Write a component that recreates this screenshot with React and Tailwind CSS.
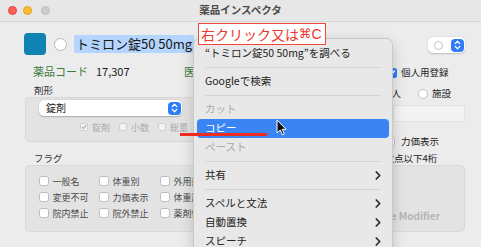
import React from "react";

const Chevron = () => (
  <svg width="6" height="9" viewBox="0 0 6 9">
    <path d="M1.3 1 L4.7 4.5 L1.3 8" fill="none" stroke="#2a2a2a" strokeWidth="1.7" strokeLinecap="round" strokeLinejoin="round" />
  </svg>
);

const Stepper = ({ className }) => (
  <div className={"flex items-center justify-center rounded-[4px] bg-[#2f7df6] " + className}>
    <svg width="7" height="10" viewBox="0 0 7 10">
      <path d="M1.2 3.6 L3.5 1.3 L5.8 3.6 M1.2 6.4 L3.5 8.7 L5.8 6.4" fill="none" stroke="white" strokeWidth="1.3" strokeLinecap="round" strokeLinejoin="round" />
    </svg>
  </div>
);

const MenuItem = ({ label, disabled, active, sub }) => (
  <div
    className={
      "mx-[3px] h-[19px] flex items-center justify-between pl-[8px] pr-[8px] rounded-[4px] " +
      (active ? "bg-[#3a84f4] text-white" : disabled ? "text-[#a9a9a9]" : "text-[#232323]")
    }
  >
    <span>{label}</span>
    {sub && <Chevron />}
  </div>
);

const Sep = () => (
  <div className="h-[9px] flex items-center px-[11px]">
    <div className="h-px w-full bg-[#d3d3d3]" />
  </div>
);

const FlagCb = ({ label }) => (
  <div className="flex items-center h-[16px]">
    <div className="w-[10px] h-[10px] rounded-[2.5px] border border-[#bdbdbd] bg-white shrink-0" />
    <span className="ml-[3.5px] text-[9px] leading-none text-[#4a4a4a] whitespace-nowrap">{label}</span>
  </div>
);

const DisCb = ({ label, checked, first }) => (
  <div className={"flex items-center " + (first ? "" : "ml-[9px]")}>
    <div className="w-[8px] h-[8px] rounded-[2px] border border-[#d0d0d0] bg-[#f3f3f3] flex items-center justify-center">
      {checked && (
        <svg width="6" height="6" viewBox="0 0 6 6">
          <path d="M1 3.2 L2.5 4.7 L5 1.3" fill="none" stroke="#b0b0b0" strokeWidth="1.1" strokeLinecap="round" strokeLinejoin="round" />
        </svg>
      )}
    </div>
    <span className="ml-[4px] text-[9px] leading-none text-[#ababab]">{label}</span>
  </div>
);

export default function App() {
  return (
    <div className="relative w-[481px] h-[247px] overflow-hidden bg-[#ececec] font-['Noto_Sans_CJK_JP',sans-serif]">
      {/* title bar */}
      <div className="h-[22px] border-b border-[#d6d6d6] bg-[#e7e7e7] grid grid-cols-[1fr_auto_1fr] items-center">
        <div className="flex items-center pl-[8px]">
          <div className="w-[9px] h-[9px] rounded-full bg-[#fe5f57] border border-[#e2463f]" />
          <div className="w-[9px] h-[9px] rounded-full bg-[#febc2e] border border-[#dea123] ml-[6px]" />
          <div className="w-[9px] h-[9px] rounded-full bg-[#cdcdcd] border border-[#bfbfbf] ml-[9px]" />
        </div>
        <div className="text-[10.5px] font-semibold text-[#4b4b4b] leading-none">薬品インスペクタ</div>
        <div />
      </div>

      {/* top section */}
      <div className="flex items-start">
        {/* left column */}
        <div className="w-[380px] pl-[24px] flex flex-col">
          <div className="mt-[11px] h-[22px] flex items-center">
            <div className="w-[22px] h-[22px] rounded-[4px] bg-[#0f84b3]" />
            <div className="ml-[8px] w-[13px] h-[13px] rounded-full border border-[#b8b8b8] bg-white" />
            <div className="ml-[7px] h-[18px] px-[2px] bg-[#b4d5fe] flex items-center text-[13px] text-[#1a1a1a] whitespace-nowrap">
              トミロン錠50 50mg
            </div>
          </div>
          <div className="mt-[9px] h-[14px] flex items-center pl-[9px]">
            <span className="w-[63px] text-[11px] text-[#3c7b3f] leading-none">薬品コード</span>
            <span className="w-[88px] text-[11px] text-[#1c1c1c] leading-none">17,307</span>
            <span className="text-[11px] text-[#3c7b3f] leading-none">医</span>
          </div>
          <div className="mt-[7px] h-[12px] flex items-center pl-[10px] text-[9.5px] text-[#333] leading-none">剤形</div>
          <div className="ml-[1px] h-[45px] w-[340px] rounded-[5px] bg-[#e3e3e3] border border-[#d9d9d9] flex flex-col">
            <div className="ml-[13px] mt-[2px] w-[143px] h-[16px] rounded-[5px] bg-white shadow-[0_0.5px_1.5px_rgba(0,0,0,0.25)] flex items-center justify-between pl-[7px] pr-[1.5px]">
              <span className="text-[10px] text-[#1a1a1a] leading-none">錠剤</span>
              <Stepper className="w-[13px] h-[13px]" />
            </div>
            <div className="mt-[5px] h-[12px] flex items-center pl-[54px]">
              <DisCb label="錠剤" checked first />
              <DisCb label="小数" />
              <DisCb label="総量" />
            </div>
          </div>
          <div className="mt-[11px] h-[12px] flex items-center pl-[10px] text-[9.5px] text-[#333] leading-none">フラグ</div>
        </div>

        {/* right column */}
        <div className="w-[85px] flex flex-col">
          <div className="mt-[15px] h-[16px] flex justify-end">
            <div className="w-[37px] h-[16px] rounded-[5px] bg-white shadow-[0_0.5px_1.5px_rgba(0,0,0,0.2)] flex items-center justify-between pl-[6px] pr-[1.5px]">
              <div className="w-[9px] h-[9px] rounded-full border border-[#c4c4c4]" />
              <Stepper className="w-[13px] h-[13px]" />
            </div>
          </div>
          <div className="mt-[13px] h-[14px] flex items-center">
            <div className="ml-[7px] w-[10px] h-[10px] rounded-[2.5px] bg-[#2f7df6] flex items-center justify-center">
              <svg width="8" height="8" viewBox="0 0 8 8">
                <path d="M1.5 4.2 L3.2 5.8 L6.5 2" fill="none" stroke="white" strokeWidth="1.4" strokeLinecap="round" strokeLinejoin="round" />
              </svg>
            </div>
            <span className="ml-[4px] text-[9.5px] text-[#222] leading-none whitespace-nowrap">個人用登録</span>
          </div>
          <div className="mt-[7px] h-[14px] flex items-center">
            <span className="ml-[2px] text-[9.5px] text-[#222] leading-none">個人</span>
            <div className="ml-[17px] w-[10px] h-[10px] rounded-full border border-[#c4c4c4] bg-white" />
            <span className="ml-[4px] text-[9.5px] text-[#222] leading-none">施設</span>
          </div>
          <div className="mt-[4px] ml-[13px] w-[72px] h-[17px] bg-[#f3f3f3] border border-[#e2e2e2] rounded-[2px]" />
          <div className="mt-[14px] h-[12px] flex items-center">
            <div className="ml-[5px] w-[10px] h-[10px] rounded-[2.5px] border border-[#bdbdbd] bg-white" />
            <span className="ml-[6px] text-[9.5px] text-[#222] leading-none whitespace-nowrap">力価表示</span>
          </div>
          <div className="mt-[5px] h-[12px] flex items-center">
            <span className="ml-[-5px] text-[9.5px] text-[#222] leading-none whitespace-nowrap">小数点以下4桁</span>
          </div>
        </div>
      </div>

      {/* flag box */}
      <div className="ml-[25px] w-[440px] h-[67px] rounded-[5px] bg-[#e3e3e3] border border-[#d9d9d9] flex">
        <div className="pl-[13px] pt-[7px] grid grid-cols-[60px_61px_60px] content-start">
          <FlagCb label="一般名" />
          <FlagCb label="体重別" />
          <FlagCb label="外用剤" />
          <FlagCb label="変更不可" />
          <FlagCb label="力価表示" />
          <FlagCb label="体重計算" />
          <FlagCb label="院内禁止" />
          <FlagCb label="院外禁止" />
          <FlagCb label="薬剤情報" />
        </div>
        <div className="ml-auto mr-[24px] self-end mb-[10px] text-[10px] font-semibold text-[#b5b5b5] leading-none">Dose Modifier</div>
      </div>

      {/* context menu */}
      <div className="absolute left-[193px] top-[38px] w-[200px] h-[220px] rounded-[7px] bg-[#e8e8e8] border border-[#c9c9c9] shadow-[0_4px_14px_rgba(0,0,0,0.18)] pt-[5px] text-[10.5px] leading-none">
        <MenuItem label={"\u201Cトミロン錠50 50mg\u201Dを調べる"} />
        <Sep />
        <MenuItem label="Googleで検索" />
        <Sep />
        <MenuItem label="カット" disabled />
        <MenuItem label="コピー" active />
        <MenuItem label="ペースト" disabled />
        <Sep />
        <MenuItem label="共有" sub />
        <Sep />
        <MenuItem label="スペルと文法" sub />
        <MenuItem label="自動置換" sub />
        <MenuItem label="スピーチ" sub />
      </div>

      {/* callout */}
      <div className="absolute left-[198px] top-[23px] w-[128px] h-[22px] bg-white border-[1.5px] border-[#f2463a] flex items-center pl-[2px] text-[14px] text-[#f0352a] leading-none whitespace-nowrap">
        <span>右クリック又は</span>
        <span className="font-['DejaVu_Sans',sans-serif] text-[12.5px]">⌘</span>
        <span className="font-['Liberation_Sans',sans-serif]">C</span>
      </div>

      {/* red underline */}
      <div className="absolute left-[180px] top-[133px] w-[87px] h-[3px] bg-[#ee2b1f]" />

      {/* cursor */}
      <svg className="absolute left-[276px] top-[119px]" width="11" height="17" viewBox="0 0 11 17">
        <path d="M1 1 L1 14 L4.2 11 L6.4 15.8 L8.3 15 L6.2 10.3 L10 10.3 Z" fill="#111" stroke="white" strokeWidth="1" strokeLinejoin="round" />
      </svg>
    </div>
  );
}
